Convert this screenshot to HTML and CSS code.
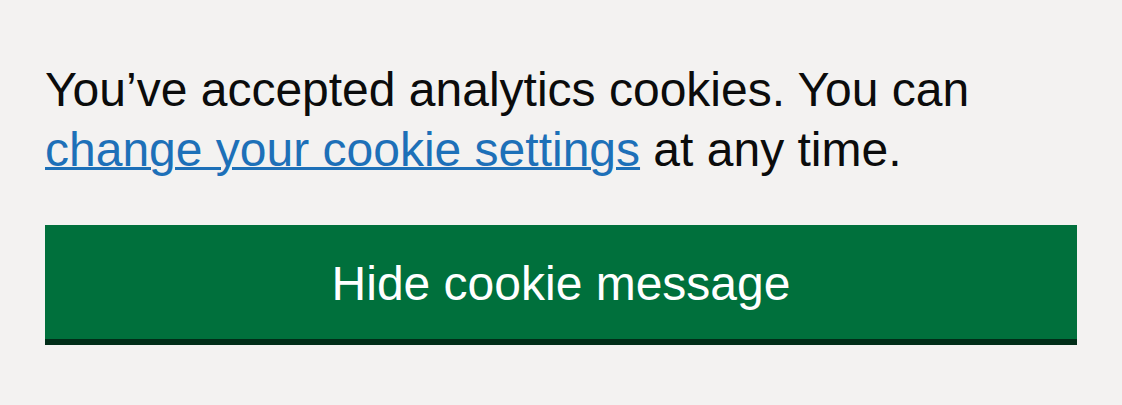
FILE: index.html
```html
<!DOCTYPE html>
<html lang="en">
<head>
<meta charset="utf-8">
<title>Cookie banner</title>
<link rel="stylesheet" href="styles.css">
</head>
<body>
<div class="cookie-banner">
  <p class="cookie-text">You’ve accepted analytics cookies. You can <a class="cookie-link" href="#">change your cookie settings</a> at any time.</p>
  <button class="hide-button" type="button">Hide cookie message</button>
</div>
</body>
</html>
```

FILE: styles.css
```css
html, body {
  margin: 0;
  padding: 0;
  background: #f3f2f1;
}

.cookie-banner {
  padding: 60px 45px 60px;
  font-family: "Liberation Sans", Arial, sans-serif;
  color: #0b0c0c;
}

.cookie-text {
  margin: 0 0 45px;
  font-size: 48px;
  line-height: 60px;
}

.cookie-link {
  color: #1d70b8;
  text-decoration: underline;
  text-decoration-thickness: 3px;
  text-underline-offset: 1px;
}

.hide-button {
  display: block;
  width: 100%;
  margin: 0;
  padding: 24px 30px 21px;
  border: 6px solid transparent;
  border-radius: 0;
  background: #00703c;
  box-shadow: 0 6px 0 #002d18;
  color: #ffffff;
  font-family: "Liberation Sans", Arial, sans-serif;
  font-size: 48px;
  line-height: 57px;
  text-align: center;
  cursor: pointer;
}
```
